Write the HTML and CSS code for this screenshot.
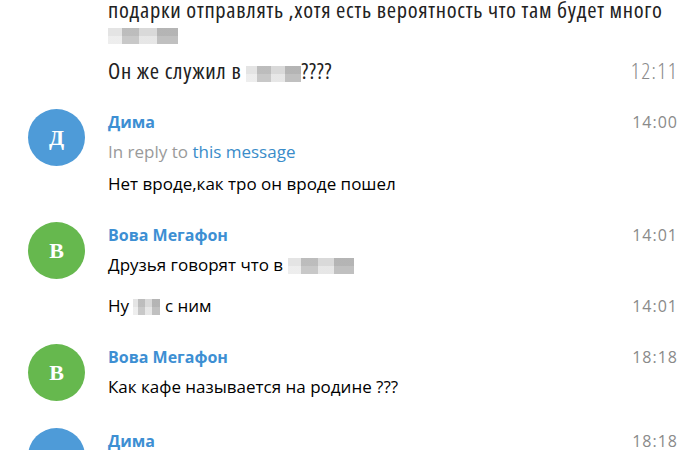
FILE: index.html
```html
<!DOCTYPE html>
<html lang="ru">
<head>
<meta charset="utf-8">
<link rel="stylesheet" href="styles.css">
</head>
<body>
<div class="history">
  <div class="message first">
    <div class="avatar-col"></div>
    <div class="body cond">
      <div class="text">подарки отправлять ,хотя есть вероятность что там будет много</div>
      <div class="text"><span class="blur w70"></span></div>
    </div>
  </div>
  <div class="message joined cond-join">
    <div class="avatar-col"></div>
    <div class="body cond">
      <div class="time cond-time">12:11</div>
      <div class="text">Он же служил в <span class="blur w55"></span>????</div>
    </div>
  </div>

  <div class="message">
    <div class="avatar-col"><div class="avatar blue">Д</div></div>
    <div class="body">
      <div class="time">14:00</div>
      <div class="name">Дима</div>
      <div class="reply">In reply to <a class="link">this message</a></div>
      <div class="text">Нет вроде,как тро он вроде пошел</div>
    </div>
  </div>

  <div class="message">
    <div class="avatar-col"><div class="avatar green">В</div></div>
    <div class="body">
      <div class="time">14:01</div>
      <div class="name">Вова Мегафон</div>
      <div class="text">Друзья говорят что в <span class="blur w66"></span></div>
    </div>
  </div>
  <div class="message joined">
    <div class="avatar-col"></div>
    <div class="body">
      <div class="time">14:01</div>
      <div class="text">Ну <span class="blur w27"></span> с ним</div>
    </div>
  </div>

  <div class="message">
    <div class="avatar-col"><div class="avatar green">В</div></div>
    <div class="body">
      <div class="time">18:18</div>
      <div class="name">Вова Мегафон</div>
      <div class="text">Как кафе называется на родине ???</div>
    </div>
  </div>

  <div class="message">
    <div class="avatar-col"><div class="avatar blue">Д</div></div>
    <div class="body">
      <div class="time">18:18</div>
      <div class="name">Дима</div>
    </div>
  </div>
</div>
</body>
</html>
```
FILE: styles.css
```css
html, body {
  margin: 0;
  padding: 0;
  background: #ffffff;
  overflow: hidden;
}
body {
  width: 690px;
  height: 450px;
  font-family: "Open Sans", "Noto Sans", sans-serif;
  color: #000;
}
.history {
  margin-top: -2px;
}
.message {
  display: flex;
  padding-top: 29px;
}
.message.first {
  padding-top: 0;
}
.message.joined {
  padding-top: 16px;
}
.message.cond-join {
  padding-top: 15px;
}
.avatar-col {
  width: 108px;
  flex: none;
}
.avatar {
  margin-left: 28px;
  margin-top: -2px;
  width: 57px;
  height: 57px;
  border-radius: 50%;
  color: #fff;
  font-family: "Liberation Serif", "DejaVu Serif", serif;
  font-weight: bold;
  font-size: 22px;
  display: flex;
  align-items: center;
  justify-content: center;
}
.avatar.blue { background: #4e9bd8; }
.avatar.green { background: #66b84e; }
.body {
  flex: 1;
  padding-right: 13px;
  font-size: 17px;
  line-height: 22px;
}
.time {
  float: right;
  color: #8a8a8a;
  font-size: 16px;
  letter-spacing: 1px;
  margin-right: -1px;
}
.name {
  color: #3d8fd3;
  font-weight: bold;
  font-size: 16px;
  margin-bottom: 8px;
}
.reply {
  color: #9a9a9a;
  margin-bottom: 10px;
}
.link {
  color: #3a8cc9;
}
.text {
  white-space: nowrap;
}
.cond {
  font-size: 22.5px;
  line-height: 23px;
  font-stretch: 87.5%;
  font-weight: 400;
  letter-spacing: 0.7px;
  color: #222;
}
.cond-time {
  font-size: 22px;
  font-weight: 300;
  letter-spacing: 1.4px;
  font-stretch: 80%;
  color: #8a8a8a;
}
.blur {
  display: inline-block;
  height: 16px;
  vertical-align: -3px;
  background:
    linear-gradient(90deg, rgba(255,255,255,0.5) 0 20%, rgba(170,170,170,0.4) 20% 45%, rgba(255,255,255,0.3) 45% 70%, rgba(150,150,150,0.4) 70% 100%),
    linear-gradient(180deg, #c9c9c9 0 50%, #dcdcdc 50% 100%);
}
.w70 { width: 70px; }
.w55 { width: 55px; }
.w66 { width: 66px; }
.w27 { width: 27px; }
```
